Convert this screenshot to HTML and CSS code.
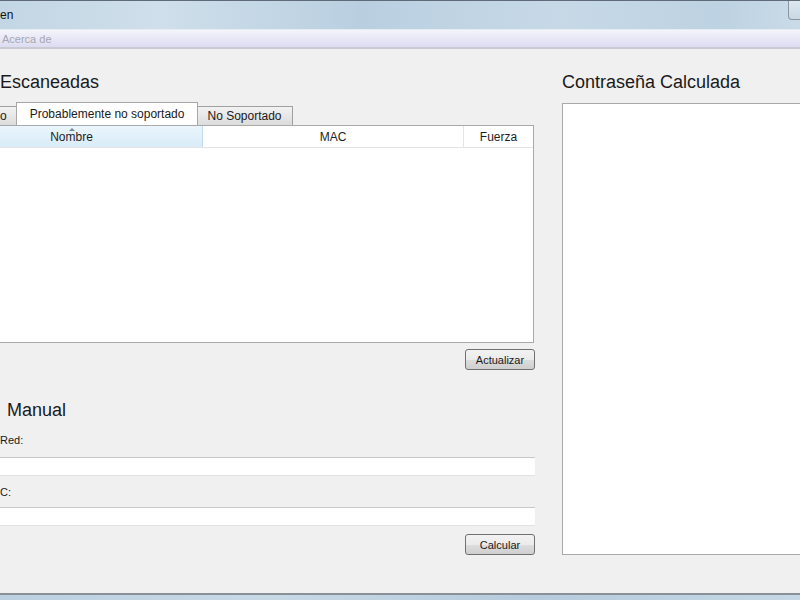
FILE: index.html
```html
<!DOCTYPE html>
<html lang="es">
<head>
    <meta charset="UTF-8">
    <title>Redes</title>
    <link rel="stylesheet" href="styles.css">
</head>
<body>
    <div class="titlebar">
        <span class="title">en</span>
        <span class="win-btn"></span>
    </div>
    <div class="menubar">
        <span class="menu-item">Acerca de</span>
    </div>

    <div class="main">
        <!-- left: scanned networks + manual entry -->
        <div class="left">
            <h2 class="heading">Escaneadas</h2>
            <div class="tabs">
                <div class="tab tab-first">o</div>
                <div class="tab tab-active">Probablemente no soportado</div>
                <div class="tab tab-last">No Soportado</div>
            </div>
            <div class="table">
                <div class="thead">
                    <div class="th th-name"><span class="sort"></span>Nombre</div>
                    <div class="th th-mac">MAC</div>
                    <div class="th th-force">Fuerza</div>
                </div>
            </div>
            <div class="actions">
                <button class="btn">Actualizar</button>
            </div>

            <h2 class="heading heading-manual">Manual</h2>
            <label class="field-label">Red:</label>
            <input class="field" type="text">
            <label class="field-label field-label-mac">C:</label>
            <input class="field" type="text">
            <div class="actions actions-calc">
                <button class="btn">Calcular</button>
            </div>
        </div>

        <!-- right: computed password -->
        <div class="right">
            <h2 class="heading">Contraseña Calculada</h2>
            <div class="result"></div>
        </div>
    </div>

    <div class="statusbar"></div>
</body>
</html>
```

FILE: styles.css
```css
body {
    margin: 0;
    width: 800px;
    height: 600px;
    overflow: hidden;
    background-color: #f0f0f0;
    font-family: "Liberation Sans", Arial, sans-serif;
    font-size: 12px;
    color: #1e1e1e;
    position: relative;
}

.titlebar {
    height: 28px;
    border-top: 1px solid #5f6b78;
    background: linear-gradient(90deg, #c3d6e4 0%, #cfdfeb 20%, #b9cfe0 45%, #c7d9e7 70%, #bdd2e2 90%, #cadbe8 100%);
    display: flex;
    align-items: center;
    justify-content: space-between;
}

.title {
    font-size: 12px;
    color: #111;
    margin-top: -1px;
}

.win-btn {
    width: 24px;
    height: 18px;
    margin-top: -10px;
    margin-right: -14px;
    border: 1px solid #8a96a2;
    border-top: none;
    border-radius: 0 0 4px 4px;
    background: linear-gradient(#dde8f0, #c9d8e4);
}

.menubar {
    height: 17px;
    border-top: 1px solid #e6ebf2;
    border-bottom: 2px solid #c9cad2;
    background: linear-gradient(#f4f4fb, #dcdcf2);
    display: flex;
    align-items: center;
}

.menu-item {
    color: #a4a6b0;
    font-size: 11px;
    margin-left: 2px;
}

.main {
    display: flex;
}

.left {
    width: 535px;
    display: flex;
    flex-direction: column;
}

.right {
    margin-left: 27px;
    flex: 1;
    display: flex;
    flex-direction: column;
}

.heading {
    margin: 21px 0 0 0;
    height: 24px;
    line-height: 24px;
    font-size: 18px;
    font-weight: normal;
    color: #1a1a1a;
}

.tabs {
    margin-top: 8px;
    display: flex;
    align-items: flex-end;
    height: 23px;
}

.tab {
    height: 18px;
    line-height: 19px;
    padding: 0 8px;
    border: 1px solid #a0a0a0;
    border-bottom: none;
    background: linear-gradient(#f2f2f2, #dcdcdc);
    color: #1a1a1a;
}

.tab-first {
    padding: 0 9px 0 0;
    border-left: none;
}

.tab-active {
    height: 22px;
    line-height: 22px;
    padding: 0 13px;
    background: #ffffff;
    border-color: #a8a8a8;
    margin: 0 -1px;
    position: relative;
    z-index: 1;
}

.tab-last {
    padding: 0 10px 0 9px;
}

.table {
    height: 216px;
    border: 1px solid #a9a9a9;
    background: #ffffff;
    margin-left: -60px;
    margin-right: 1px;
}

.thead {
    display: flex;
    height: 21px;
    border-bottom: 1px solid #e4e4e4;
}

.th {
    line-height: 22px;
    text-align: center;
    border-right: 1px solid #e4e4e4;
    position: relative;
}

.th-name {
    width: 261px;
    background: linear-gradient(#eaf5fc, #d9ecf8);
    border-right-color: #c3dcee;
}

.th-mac {
    width: 260px;
}

.th-force {
    flex: 1;
    border-right: none;
}

.sort {
    position: absolute;
    left: 128px;
    top: 2px;
    width: 0;
    height: 0;
    border-left: 3px solid transparent;
    border-right: 3px solid transparent;
    border-bottom: 3px solid #7a8a98;
}

.actions {
    display: flex;
    justify-content: flex-end;
    margin-top: 6px;
}

.btn {
    width: 70px;
    height: 21px;
    padding: 0;
    font-family: inherit;
    font-size: 11px;
    color: #1a1a1a;
    border: 1px solid #707070;
    border-radius: 3px;
    background: linear-gradient(#f2f2f2 0%, #ebebeb 50%, #dddddd 51%, #cfcfcf 100%);
}

.heading-manual {
    margin-top: 28px;
    padding-left: 7px;
}

.field-label {
    margin-top: 11px;
    height: 14px;
    line-height: 14px;
    font-size: 11px;
    color: #1a1a1a;
}

.field-label-mac {
    margin-top: 9px;
}

.field {
    margin-top: 10px;
    height: 19px;
    padding: 0;
    border: none;
    border-top: 1px solid #c8c8c8;
    border-bottom: 1px solid #e2e2e2;
    background: #ffffff;
    box-sizing: border-box;
    width: 545px;
    margin-left: -10px;
}

.field-label-mac + .field {
    margin-top: 8px;
}

.actions-calc {
    margin-top: 8px;
}

.result {
    margin-top: 9px;
    height: 450px;
    border: 1px solid #a9a9a9;
    background: #ffffff;
    margin-right: -10px;
}

.statusbar {
    position: absolute;
    left: 0;
    right: 0;
    bottom: 0;
    height: 5px;
    border-top: 2px solid #8a9098;
    background: linear-gradient(90deg, #bcd0e0, #c8d9e6, #b6cbdc, #c6d8e5);
}
```
